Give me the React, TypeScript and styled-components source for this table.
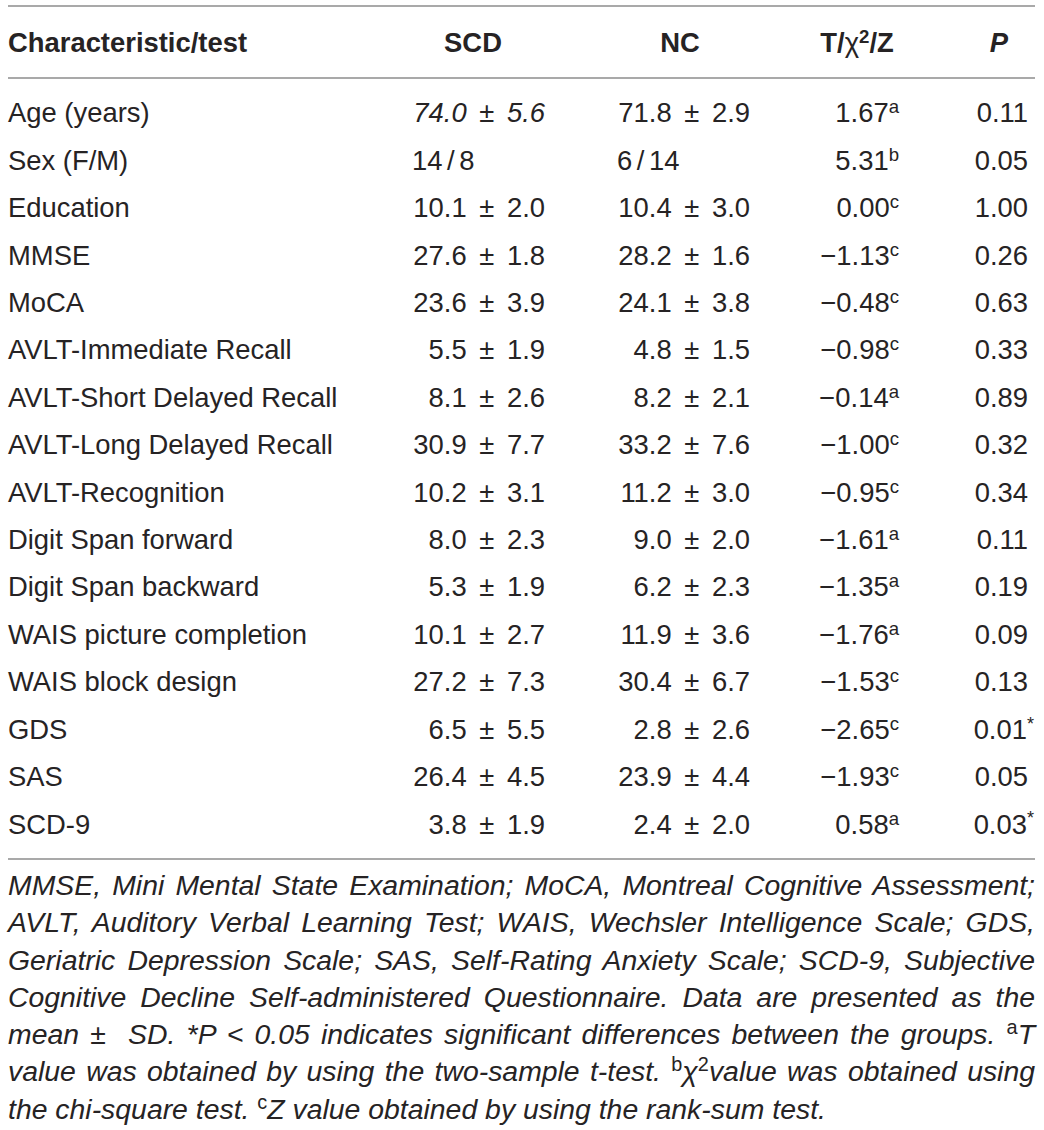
import React from "react";
import styled, { createGlobalStyle } from "styled-components";

const Global = createGlobalStyle`
  html, body { margin: 0; padding: 0; background: #ffffff; }
  body {
    font-family: "Liberation Sans", Arial, Helvetica, sans-serif;
    color: #262324;
  }
`;

const Page = styled.div`
  padding: 5px 9px 0 8px;
  width: 1027px;
`;

const Table = styled.div`
  border-top: 2px solid #a9a9a9;
  border-bottom: 2px solid #a9a9a9;
`;

const Row = styled.div<{ $head?: boolean }>`
  display: grid;
  grid-template-columns: 328px 144px 140px 84px 64px;
  column-gap: 65px;
  font-size: 27.4px;
  line-height: 47.4px;
  font-weight: ${(p) => (p.$head ? 700 : 400)};
  white-space: nowrap;
`;

const Head = styled.div`
  padding: 12px 0 11px;
  border-bottom: 2px solid #a9a9a9;
`;

const Body = styled.div`
  padding: 10px 0 10px;
`;

const Cell = styled.div<{ $align?: "left" | "right" | "center"; $italic?: boolean; $pad?: number }>`
  text-align: ${(p) => p.$align ?? "right"};
  font-style: ${(p) => (p.$italic ? "italic" : "normal")};
  padding-left: ${(p) => p.$pad ?? 0}px;
`;

const Value = styled(Cell)`
  word-spacing: 5px;
`;

const Sup = styled.sup`
  font-size: 0.68em;
  line-height: 0;
  vertical-align: 0.48em;
`;

const Star = styled.sup`
  font-size: 0.66em;
  line-height: 0;
  vertical-align: 0.5em;
  margin-right: -6px;
`;

const Chi = styled.span`
  font-weight: 400;
  font-style: normal;
`;

const Note = styled.div`
  margin-top: 7px;
  font-size: 28.4px;
  line-height: 37.3px;
  font-style: italic;
`;

const NoteLine = styled.div<{ $last?: boolean }>`
  text-align: ${(p) => (p.$last ? "left" : "justify")};
  text-align-last: ${(p) => (p.$last ? "left" : "justify")};
  white-space: nowrap;
`;

const Up = styled.sup`
  font-style: normal;
  font-size: 0.7em;
  line-height: 0;
  vertical-align: 0.48em;
`;

type R = {
  label: string;
  scd: string;
  nc: string;
  t: string;
  sup: string;
  p: string;
  star?: boolean;
  scdItalic?: boolean;
  left?: boolean;
};

const rows: R[] = [
  { label: "Age (years)", scd: "74.0 ± 5.6", nc: "71.8 ± 2.9", t: "1.67", sup: "a", p: "0.11", scdItalic: true },
  { label: "Sex (F/M)", scd: "14\u2006/\u20068", nc: "6\u2006/\u200614", t: "5.31", sup: "b", p: "0.05", left: true },
  { label: "Education", scd: "10.1 ± 2.0", nc: "10.4 ± 3.0", t: "0.00", sup: "c", p: "1.00" },
  { label: "MMSE", scd: "27.6 ± 1.8", nc: "28.2 ± 1.6", t: "−1.13", sup: "c", p: "0.26" },
  { label: "MoCA", scd: "23.6 ± 3.9", nc: "24.1 ± 3.8", t: "−0.48", sup: "c", p: "0.63" },
  { label: "AVLT-Immediate Recall", scd: "5.5 ± 1.9", nc: "4.8 ± 1.5", t: "−0.98", sup: "c", p: "0.33" },
  { label: "AVLT-Short Delayed Recall", scd: "8.1 ± 2.6", nc: "8.2 ± 2.1", t: "−0.14", sup: "a", p: "0.89" },
  { label: "AVLT-Long Delayed Recall", scd: "30.9 ± 7.7", nc: "33.2 ± 7.6", t: "−1.00", sup: "c", p: "0.32" },
  { label: "AVLT-Recognition", scd: "10.2 ± 3.1", nc: "11.2 ± 3.0", t: "−0.95", sup: "c", p: "0.34" },
  { label: "Digit Span forward", scd: "8.0 ± 2.3", nc: "9.0 ± 2.0", t: "−1.61", sup: "a", p: "0.11" },
  { label: "Digit Span backward", scd: "5.3 ± 1.9", nc: "6.2 ± 2.3", t: "−1.35", sup: "a", p: "0.19" },
  { label: "WAIS picture completion", scd: "10.1 ± 2.7", nc: "11.9 ± 3.6", t: "−1.76", sup: "a", p: "0.09" },
  { label: "WAIS block design", scd: "27.2 ± 7.3", nc: "30.4 ± 6.7", t: "−1.53", sup: "c", p: "0.13" },
  { label: "GDS", scd: "6.5 ± 5.5", nc: "2.8 ± 2.6", t: "−2.65", sup: "c", p: "0.01", star: true },
  { label: "SAS", scd: "26.4 ± 4.5", nc: "23.9 ± 4.4", t: "−1.93", sup: "c", p: "0.05" },
  { label: "SCD-9", scd: "3.8 ± 1.9", nc: "2.4 ± 2.0", t: "0.58", sup: "a", p: "0.03", star: true },
];

export default function App() {
  return (
    <Page>
      <Global />
      <Table>
        <Head>
          <Row $head>
            <Cell $align="left">Characteristic/test</Cell>
            <Cell $align="center">SCD</Cell>
            <Cell $align="center">NC</Cell>
            <Cell $align="center">
              T/<Chi>χ</Chi>
              <Sup>2</Sup>/Z
            </Cell>
            <Cell $align="center" $italic $pad={6}>
              P
            </Cell>
          </Row>
        </Head>
        <Body>
          {rows.map((r) => (
            <Row key={r.label}>
              <Cell $align="left">{r.label}</Cell>
              <Value $align={r.left ? "left" : "right"} $pad={r.left ? 11 : 0} $italic={r.scdItalic}>
                {r.scd}
              </Value>
              <Value $align={r.left ? "left" : "right"} $pad={r.left ? 7 : 0}>
                {r.nc}
              </Value>
              <Cell>
                {r.t}
                <Sup>{r.sup}</Sup>
              </Cell>
              <Cell>
                {r.p}
                {r.star && <Star>*</Star>}
              </Cell>
            </Row>
          ))}
        </Body>
      </Table>
      <Note>
        <NoteLine>MMSE, Mini Mental State Examination; MoCA, Montreal Cognitive Assessment;</NoteLine>
        <NoteLine>AVLT, Auditory Verbal Learning Test; WAIS, Wechsler Intelligence Scale; GDS,</NoteLine>
        <NoteLine>Geriatric Depression Scale; SAS, Self-Rating Anxiety Scale; SCD-9, Subjective</NoteLine>
        <NoteLine>Cognitive Decline Self-administered Questionnaire. Data are presented as the</NoteLine>
        <NoteLine>
          mean ±&nbsp; SD. *P &lt; 0.05 indicates significant differences between the groups. <Up>a</Up>T
        </NoteLine>
        <NoteLine>
          value was obtained by using the two-sample t-test. <Up>b</Up>χ<Up>2</Up>value was obtained using
        </NoteLine>
        <NoteLine $last>
          the chi-square test. <Up>c</Up>Z value obtained by using the rank-sum test.
        </NoteLine>
      </Note>
    </Page>
  );
}
